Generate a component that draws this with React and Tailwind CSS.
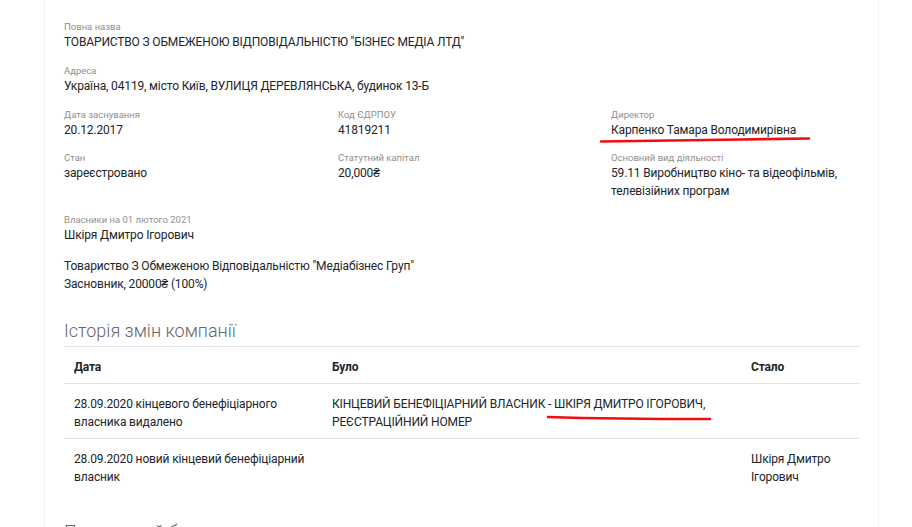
import React from 'react'

/* ------------------------------------------------------------------ */
/*  Field: small grey label + value                                    */
/* ------------------------------------------------------------------ */

function Field({ label, children, className = '' }) {
  return (
    <div className={className}>
      <p className="text-[9.5px] leading-[13px] text-[#8f8f8f]">{label}</p>
      <div className="text-[12px] leading-[18px] tracking-[-0.15px] text-[#212529]">{children}</div>
    </div>
  )
}

/* ------------------------------------------------------------------ */
/*  Red marker strokes                                                 */
/* ------------------------------------------------------------------ */

function Marker({ width, d, className }) {
  return (
    <svg
      width={width}
      height="8"
      viewBox={`0 0 ${width} 8`}
      className={`pointer-events-none absolute ${className}`}
    >
      <path d={d} stroke="#f20d0d" strokeWidth="2.6" fill="none" strokeLinecap="round" />
    </svg>
  )
}

const history = [
  {
    date: '28.09.2020 кінцевого бенефіціарного власника видалено',
    was: (
      <>
        КІНЦЕВИЙ БЕНЕФІЦІАРНИЙ ВЛАСНИК - ШКІРЯ ДМИТРО ІГОРОВИЧ,
        <br />
        РЕЄСТРАЦІЙНИЙ НОМЕР
      </>
    ),
    now: '',
    marked: true,
  },
  {
    date: '28.09.2020 новий кінцевий бенефіціарний власник',
    was: '',
    now: 'Шкіря Дмитро Ігорович',
  },
]

export default function App() {
  return (
    <div
      className="h-[527px] w-[912px] overflow-hidden bg-white"
      style={{ fontFamily: 'Roboto, "Liberation Sans", Arial, sans-serif' }}
    >
      <div className="ml-[44px] w-[835px] border-x border-[#f3f3f3] bg-white pb-[40px] pl-[19px] pr-[19px] pt-[20px]">
        <Field label="Повна назва">ТОВАРИСТВО З ОБМЕЖЕНОЮ ВІДПОВІДАЛЬНІСТЮ "БІЗНЕС МЕДІА ЛТД"</Field>

        <Field label="Адреса" className="mt-[13px]">
          Україна, 04119, місто Київ, ВУЛИЦЯ ДЕРЕВЛЯНСЬКА, будинок 13-Б
        </Field>

        <div className="mt-[13px] grid grid-cols-[274px_273px_1fr] gap-y-[12px]">
          <Field label="Дата заснування">20.12.2017</Field>
          <Field label="Код ЄДРПОУ">41819211</Field>
          <Field label="Директор" className="relative">
            Карпенко Тамара Володимирівна
            <Marker width={212} d="M2 5.5 C 60 4.5, 140 3.5, 210 2.5" className="-left-[12px] top-[28px]" />
          </Field>
          <Field label="Стан">зареєстровано</Field>
          <Field label="Статутний капітал">20,000₴</Field>
          <Field label="Основний вид діяльності">
            59.11 Виробництво кіно- та відеофільмів,
            <br />
            телевізійних програм
          </Field>
        </div>

        <Field label="Власники на 01 лютого 2021" className="mt-[13px]">
          Шкіря Дмитро Ігорович
        </Field>
        <div className="mt-[13px] text-[12px] leading-[18px] tracking-[-0.15px] text-[#212529]">
          Товариство З Обмеженою Відповідальністю "Медіабізнес Груп"
          <br />
          Засновник, 20000₴ (100%)
        </div>

        <h2 className="mt-[25px] text-[18px] font-light leading-[26px] text-[#666]">Історія змін компанії</h2>

        <table className="mt-[2px] w-[796px] table-fixed border-collapse text-[12px] leading-[18px] tracking-[-0.15px] text-[#212529]">
          <colgroup>
            <col className="w-[258px]" />
            <col className="w-[419px]" />
            <col />
          </colgroup>
          <thead>
            <tr className="border-y border-[#dee2e6]">
              <th className="h-[37px] px-[10px] pt-[3px] text-left font-bold">Дата</th>
              <th className="px-[10px] pt-[3px] text-left font-bold">Було</th>
              <th className="px-[10px] pt-[3px] text-left font-bold">Стало</th>
            </tr>
          </thead>
          <tbody>
            {history.map((row, i) => (
              <tr key={i} className={i === 0 ? 'border-b border-[#dee2e6]' : ''}>
                <td className="px-[10px] pb-[7px] pt-[11px] align-top">{row.date}</td>
                <td className="relative px-[10px] pb-[7px] pt-[11px] align-top">
                  {row.was}
                  {row.marked && (
                    <Marker width={166} d="M2 3 C 50 4.5, 110 5, 164 5" className="left-[224px] top-[30px]" />
                  )}
                </td>
                <td className="px-[10px] pb-[7px] pt-[11px] align-top">{row.now}</td>
              </tr>
            ))}
          </tbody>
        </table>

        <h2 className="mt-[26px] text-[18px] font-light leading-[26px] text-[#666]">Податковий борг</h2>
      </div>
    </div>
  )
}
